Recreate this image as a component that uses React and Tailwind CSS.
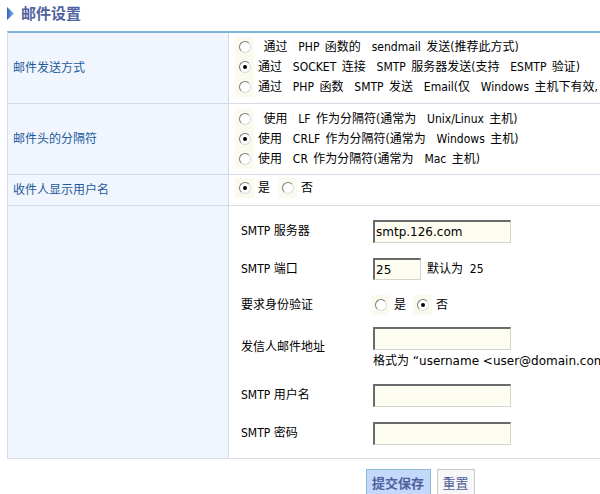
import React from "react";

const FONT = "font-['DejaVu_Sans_Condensed','DejaVu_Sans','Noto_Sans_CJK_SC',sans-serif]";

function Radio({ checked }) {
  return (
    <span className="inline-flex w-[19px] h-[20px] items-center justify-center bg-[#fafaee] shrink-0">
      <span className="w-[12px] h-[12px] rounded-full border border-t-[#7a7a7a] border-l-[#7a7a7a] border-b-[#dcdcdc] border-r-[#dcdcdc] bg-white flex items-center justify-center">
        {checked && <span className="w-[4px] h-[4px] rounded-full bg-black" />}
      </span>
    </span>
  );
}

function Option({ checked, children }) {
  return (
    <div className="flex items-center h-[20px]">
      <Radio checked={checked} />
      <span className="ml-[4px] whitespace-pre [word-spacing:2px]">{children}</span>
    </div>
  );
}

function Field({ w = "w-[138px]", h = "h-[23px]", value = "" }) {
  return (
    <div
      className={`${w} ${h} bg-[#fdfdf1] border-t-2 border-l-2 border-t-[#6a6a6a] border-l-[#6a6a6a] border-b border-r border-b-[#d4d4cc] border-r-[#d4d4cc] flex items-center pl-[1px] text-[12px] font-['DejaVu_Sans',sans-serif] text-black`}
    >
      {value}
    </div>
  );
}

function Row({ label, h, pt, children }) {
  return (
    <div className="flex border-b border-[#d6dbe8]">
      <div className={`w-[221px] ${h} shrink-0 bg-[#f1f6fe] border-r border-[#d6dbe8] pl-[5px] flex items-center text-[#1d5a9c]`}>
        {label}
      </div>
      <div className={`flex-1 ${h} ${pt} pl-[6px]`}>{children}</div>
    </div>
  );
}

function FormRow({ label, h, children }) {
  return (
    <div className={`flex ${h} items-center`}>
      <div className="w-[132px] shrink-0 whitespace-pre">{label}</div>
      <div className="flex items-center">{children}</div>
    </div>
  );
}

export default function App() {
  return (
    <div className={`w-[600px] h-[494px] overflow-hidden bg-white text-[12px] leading-[20px] text-black ${FONT}`}>
      <div className="h-[26px] mb-[5px] flex items-center pl-[7px]">
        <svg width="7" height="13" viewBox="0 0 7 13" className="mr-[7px]">
          <defs>
            <linearGradient id="tg" x1="0" y1="0" x2="1" y2="0">
              <stop offset="0" stopColor="#2f63c4" />
              <stop offset="1" stopColor="#8fb4ea" />
            </linearGradient>
          </defs>
          <polygon points="0,0 7,6.5 0,13" fill="url(#tg)" />
        </svg>
        <span className="text-[15px] font-bold text-[#5262a0] font-['Noto_Sans_CJK_SC',sans-serif]">邮件设置</span>
      </div>

      <div className="ml-[7px] w-[826px] border-t-2 border-t-[#80b4d6] border-l border-l-[#d6dbe8]">
        <Row label="邮件发送方式" h="h-[70px]" pt="pt-[4px]">
          <Option>{" 通过  PHP 函数的  sendmail 发送(推荐此方式)"}</Option>
          <Option checked>{"通过  SOCKET 连接  SMTP 服务器发送(支持  ESMTP 验证)"}</Option>
          <Option>{"通过  PHP 函数  SMTP 发送  Email(仅  Windows 主机下有效, 不支持  ESMTP 验证)"}</Option>
        </Row>
        <Row label="邮件头的分隔符" h="h-[70px]" pt="pt-[5px]">
          <Option>{" 使用  LF 作为分隔符(通常为  Unix/Linux 主机)"}</Option>
          <Option checked>{"使用  CRLF 作为分隔符(通常为  Windows 主机)"}</Option>
          <Option>{"使用  CR 作为分隔符(通常为  Mac 主机)"}</Option>
        </Row>
        <Row label="收件人显示用户名" h="h-[30px]" pt="pt-[3px]">
          <div className="flex items-center h-[20px]">
            <Radio checked />
            <span className="ml-[4px]">是</span>
            <span className="ml-[8px] flex items-center">
              <Radio />
              <span className="ml-[4px]">否</span>
            </span>
          </div>
        </Row>
        <div className="flex border-b border-[#d6dbe8]">
          <div className="w-[221px] h-[252px] shrink-0 bg-[#f1f6fe] border-r border-[#d6dbe8]" />
          <div className="flex-1 h-[252px] pl-[12px] pt-[6px]">
            <FormRow label="SMTP 服务器" h="h-[38px]">
              <Field value="smtp.126.com" />
            </FormRow>
            <FormRow label="SMTP 端口" h="h-[38px]">
              <Field w="w-[48px]" h="h-[22px]" value="25" />
              <span className="ml-[6px] whitespace-pre">默认为  25</span>
            </FormRow>
            <FormRow label="要求身份验证" h="h-[34px]">
              <div className="flex items-center h-[20px] -ml-[2px]">
                <Radio />
                <span className="ml-[4px]">是</span>
                <span className="ml-[7px] flex items-center">
                  <Radio checked />
                  <span className="ml-[4px]">否</span>
                </span>
              </div>
            </FormRow>
            <div className="flex h-[50px]">
              <div className="w-[132px] shrink-0 flex items-center">发信人邮件地址</div>
              <div className="flex flex-col pt-[5px]">
                <Field />
                <div className="mt-[1px] h-[20px] whitespace-nowrap font-['DejaVu_Sans','Noto_Sans_CJK_SC',sans-serif]">格式为 “username &lt;user@domain.com&gt;”</div>
              </div>
            </div>
            <FormRow label="SMTP 用户名" h="h-[46px]">
              <Field />
            </FormRow>
            <FormRow label="SMTP 密码" h="h-[30px]">
              <Field />
            </FormRow>
          </div>
        </div>
      </div>

      <div className="ml-[7px] w-[826px] mt-[10px] flex justify-center gap-[6px]">
        <button className="h-[27px] w-[65px] bg-[#c3d9fc] border border-[#8dbbd6] text-[13px] font-bold text-[#50609c] font-['Noto_Sans_CJK_SC',sans-serif] flex items-center justify-center">
          提交保存
        </button>
        <button className="h-[27px] w-[38px] bg-[#f7f7f7] border border-[#c8c8c8] text-[13px] text-[#50609c] font-['Noto_Sans_CJK_SC',sans-serif] flex items-center justify-center">
          重置
        </button>
      </div>
    </div>
  );
}
